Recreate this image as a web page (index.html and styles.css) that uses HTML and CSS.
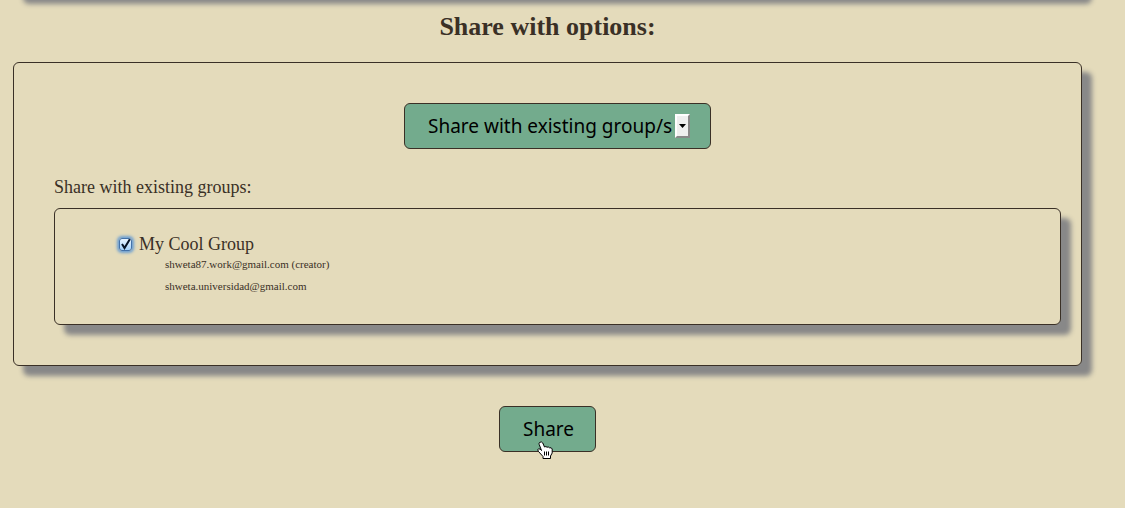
FILE: index.html
```
<!DOCTYPE html>
<html lang="en">
<head>
<meta charset="utf-8">
<title>Share with options</title>
<link rel="stylesheet" href="styles.css">
</head>
<body>
<main class="page">
  <div class="panel panel-previous"></div>
  <h1 class="title">Share with options:</h1>
  <form class="share-form">
    <section class="panel options">
      <div class="mode">
        <select class="button mode-select" aria-label="Share mode">
          <option>Share with existing group/s</option>
        </select>
        <span class="arrow" aria-hidden="true"><svg width="7" height="4" viewBox="0 0 7 4"><path d="M0 0h7L3.500 4z"/></svg></span>
      </div>
      <h2 class="subtitle">Share with existing groups:</h2>
      <div class="panel groups">
        <div class="group">
          <input class="group-check" type="checkbox" id="cool-group" checked>
          <label for="cool-group">My Cool Group</label>
        </div>
        <ul class="members">
          <li>shweta87.work@gmail.com (creator)</li>
          <li>shweta.universidad@gmail.com</li>
        </ul>
      </div>
    </section>
    <div class="actions">
      <button class="button share" type="button">Share</button>
      <svg class="pointer" width="16" height="18" viewBox="0 0 16 18" aria-hidden="true">
        <path d="M2.500 1.500Q4.500 0 5.800 2l1.700 4Q9 5 10 6.200q1.500-.7 2.500.6 2-.6 2.700 1.200v4L13.500 15v2.500H6v-2L1.500 10.500Q0 8.500 1.500 7.800q1.700-.2 3 1.700L2.200 3.500Q1.800 2 2.500 1.500z" fill="#fff" stroke="#000" stroke-width="1"/>
        <path d="M7.500 10.500v4M9.500 10.500v4M11.500 10.500v4" stroke="#000" stroke-width="1"/>
      </svg>
    </div>
  </form>
</main>
</body>
</html>
```
FILE: styles.css
```
* {
  box-sizing: border-box;
}

body {
  margin: 0;
  background: #e4dbbb;
  color: #3a3026;
  font-family: Palatino, "Palatino Linotype", "Liberation Serif", serif;
}

.page {
  display: flow-root;
  padding: 0 43px 40px 13px;
  overflow: hidden;
}

.panel {
  border: 1px solid #3a3026;
  border-radius: 6px;
  background: #e4dbbb;
  box-shadow: 10px 10px 5px #888;
}

.panel-previous {
  height: 40px;
  margin-top: -46px;
}

.title {
  margin: 18px 0 20px;
  font-size: 26px;
  line-height: 30px;
  text-align: center;
}

.options {
  padding: 40px 20px 40px 40px;
}

.mode {
  position: relative;
  width: 307px;
  margin: 0 auto;
}

.button {
  height: 46px;
  padding: 0 23px;
  border: 1px solid #3a3026;
  border-radius: 6px;
  background: #73ab8d;
  color: #000;
  font-family: "Lucida Grande", "Noto Sans", sans-serif;
  font-size: 19px;
}

.mode-select {
  display: block;
  width: 100%;
  appearance: none;
}

.arrow {
  position: absolute;
  top: 11px;
  right: 21px;
  display: flex;
  align-items: center;
  justify-content: center;
  width: 15px;
  height: 24px;
  border: 2px solid;
  border-color: #fff #888 #888 #fff;
  background: #efefef;
  pointer-events: none;
}

.subtitle {
  margin: 28px 0 10px;
  font-size: 18px;
  font-weight: normal;
  line-height: 21px;
}

.groups {
  padding: 26px 62px 27px;
}

.group {
  display: flex;
  align-items: center;
  gap: 7px;
  font-size: 18px;
  line-height: 18px;
}

.group-check {
  appearance: none;
  width: 13px;
  height: 13px;
  margin: 0 0 0 2px;
  border: 1px solid #4372aa;
  border-radius: 3px;
  background: url("data:image/svg+xml,%3Csvg xmlns='http://www.w3.org/2000/svg' viewBox='0 0 11 11'%3E%3Cpath d='M2 5l2.500 4L10 0' fill='none' stroke='%23071426' stroke-width='2'/%3E%3C/svg%3E") center / 11px 11px no-repeat, linear-gradient(#e8f4ff, #a5d2fa);
  box-shadow: 0 0 3px 2px #6c9fd2;
}

.members {
  margin: 0;
  padding: 0 0 0 48px;
  list-style: none;
  font-size: 11px;
  line-height: 22px;
}

.actions {
  position: relative;
  display: flex;
  justify-content: center;
  margin-top: 40px;
}

.share {
  width: 97px;
}

.pointer {
  position: absolute;
  top: 35px;
  left: 50%;
  margin-left: -11px;
}
```
